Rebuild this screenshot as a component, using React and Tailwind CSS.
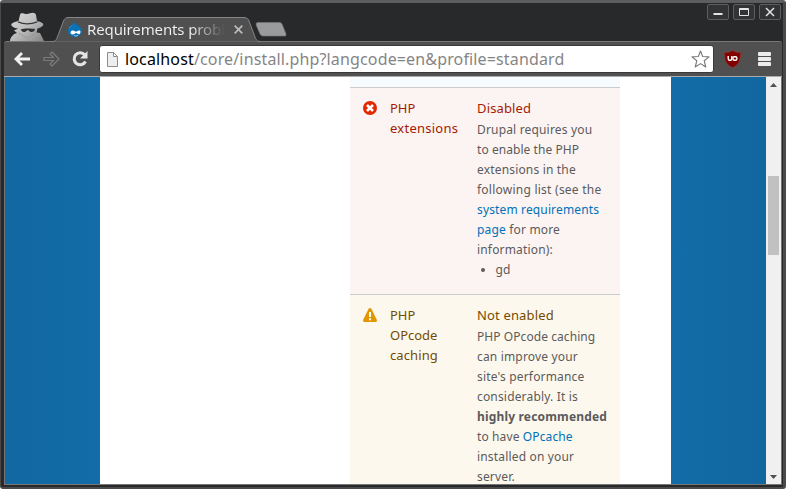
import React from "react";

function Incognito() {
  return (
    <svg className="h-[29px] w-[34px] shrink-0" viewBox="0 0 34 29">
      <defs>
        <linearGradient id="spy" x1="0" y1="0" x2="1" y2="1">
          <stop offset="0" stopColor="#dcdcdc" />
          <stop offset="0.5" stopColor="#bcbcbc" />
          <stop offset="1" stopColor="#858585" />
        </linearGradient>
      </defs>
      <path fill="url(#spy)" d="M10 3C10 1 12 .8 14 1.500C16 2.300 18 2.200 20 1.300C23 .2 25.500 .8 26 3L27 9C31 10 34 11.500 33.300 13C32.500 15 29.500 16 27.500 16.500L26.500 20.500L30 21L34 29H0C.5 25 3 22 7 21L4 18.500L8 16.500C4 16 1 14 1.300 12.500C1.500 11 5 9.800 8.500 9Z" />
      <path fill="none" stroke="#393a3b" strokeWidth="1.300" d="M8 9.800Q17 14 27.300 9.800" />
      <path fill="#303132" d="M11 17.300C13 16.300 22 16.300 25 17.100C25 20.500 20 21 18.500 18.300H17C15.500 21 11 20.500 11 17.300Z" />
      <path fill="none" stroke="#999" strokeWidth="1" d="M8.500 21L17 26L25.500 21" />
    </svg>
  );
}

function Droplet() {
  return (
    <svg className="h-[15px] w-[14px] shrink-0" viewBox="0 0 14 15">
      <path fill="#0a72b8" d="M6.200 0C7 2 9.500 2.500 11.500 4.500C13 6 14 7.500 13.600 9.800C13 13 10 15 7 15C3 15 0 12.200 0 8.700C0 6 1.300 4.300 3.300 3.200C5 2.300 6 1.500 6.200 0Z" />
      <path fill="#7cc1ea" d="M5.800 1.800C5 3.800 2.500 4 1.300 6.500C1.500 4.200 5 3.800 5.800 1.800Z" />
      <path fill="#fff" d="M4.500 8.500C6 8.200 7 9.300 8.200 9.700C9.400 9 11.300 7.800 12.300 9C13 10.300 12 12.300 10.800 12.200C9.800 12 9 11 8.200 11C7.300 11 6.300 12.500 4.700 12.400C1.800 12.200 2 9 4.500 8.500ZM6.200 13.200C7.300 13.900 8.800 13.900 9.500 13.100L9.800 13.800C8.800 14.600 7.200 14.500 6 13.800Z" />
    </svg>
  );
}

function WindowButton({ children }) {
  return (
    <span className="flex h-4 w-[22px] items-center justify-center rounded-[2px] border border-[#5d5e5f] bg-[#323334]">
      <svg className="h-[14px] w-5 shrink-0" viewBox="0 0 20 14" fill="none" stroke="#e4e4e4">
        {children}
      </svg>
    </span>
  );
}

function TitleBar() {
  return (
    <header className="flex h-[38px] shrink-0">
      <div className="w-[50px] shrink-0 pt-[9px] pl-[9px]"><Incognito /></div>
      <div className="relative mt-[14px] h-[25px] w-[212px] shrink-0">
        <svg className="absolute inset-0 h-[25px] w-[212px]" viewBox="0 0 212 25">
          <path fill="#505050" stroke="#868686" d="M0 24.500C4 24.500 5 23.500 6 21L12.500 4C13.500 1.500 15 .5 17 .5H193C195.500 .5 197 1.500 198 4L204 20C205.500 23.500 206.500 24.500 210 24.500" />
        </svg>
        <div className="relative flex h-[24px] items-center pl-[17px]">
          <Droplet />
          <span className="ml-[5px] w-[138px] bg-gradient-to-r from-[#f2f2f2] from-75% to-[#505050] to-100% bg-clip-text text-[15px] leading-6 tracking-[-0.12px] whitespace-nowrap text-transparent">
            Requirements probl
          </span>
          <svg className="ml-[9px] h-[9px] w-[9px] shrink-0" viewBox="0 0 9 9" stroke="#bbb" strokeWidth="1.700">
            <path d="M.7 .7L8.300 8.300M8.300 .7L.7 8.300" />
          </svg>
        </div>
      </div>
      <svg className="-ml-[8px] mt-[19px] h-[15px] w-[32px] shrink-0" viewBox="0 0 32 15">
        <path fill="#999b9c" stroke="#777" strokeWidth=".7" d="M3 .5H24.500Q26.500 .5 27.200 2.500L31 12Q31.500 14 30 14H8Q6 14 5 12L1.200 3Q.5 .5 3 .5Z" />
      </svg>
      <div className="mt-[1px] mr-[2px] ml-auto flex gap-1">
        <WindowButton><path strokeWidth="2" d="M5.500 9H14.500" /></WindowButton>
        <WindowButton><path d="M5.500 3.500H14.500V10.500H5.500ZM5 4.500H15" /></WindowButton>
        <WindowButton><path strokeWidth="1.500" d="M6 3L14 11M14 3L6 11" /></WindowButton>
      </div>
    </header>
  );
}

function Toolbar() {
  return (
    <div className="mr-px ml-[3px] flex h-[36px] shrink-0 items-center rounded-t-[3px] border-t border-b border-t-[#777] border-b-[#aaa] bg-[#505050] pl-[10px]">
      <svg className="h-[14px] w-4 shrink-0" viewBox="0 0 16 14" fill="none" stroke="#f1f1f1" strokeWidth="2.800">
        <path d="M8 1L2 7L8 13M2 7H16" />
      </svg>
      <svg className="ml-[13px] h-[16px] w-[17px] shrink-0" viewBox="0 0 17 16" fill="none" stroke="#7b7b7b" strokeWidth="1.200">
        <path strokeLinejoin="round" d="M9 1L16 8L9 15L7 13L10.500 9.500H1V6.500H10.500L7 3Z" />
      </svg>
      <svg className="ml-[12px] h-4 w-4 shrink-0" viewBox="0 0 16 16" fill="none" stroke="#e5e5e5" strokeWidth="3">
        <path d="M12.700 3.800A6 6 0 1 0 13.500 10.500" />
        <path fill="#e5e5e5" stroke="none" d="M15.500 0V7.500H8Z" />
      </svg>
      <div className="ml-[11px] flex h-[28px] w-[615px] shrink-0 items-center rounded-[3px] border border-[#393939] bg-white pl-[7px]">
        <svg className="h-[15px] w-[11px] shrink-0" viewBox="0 0 11 15">
          <path fill="#eee" stroke="#8d8d8d" d="M.5 .5H6.500L10.500 4.500V14.500H.5ZM6.500 .5V4.500H10.500" />
        </svg>
        <span className="ml-[7px] text-[16px] leading-6 tracking-[0.145px] whitespace-nowrap text-[#858585]">
          <span className="text-black">localhost</span>/core/install.php?langcode=en&amp;profile=standard
        </span>
        <svg className="mr-[3px] ml-auto h-[18px] w-[19px] shrink-0" viewBox="0 0 19 18" fill="#fff" stroke="#777" strokeWidth="1.100">
          <path strokeLinejoin="round" d="M9.500 1L11.700 6.500L18 6.900L13.200 10.800L14.800 17L9.500 13.600L4.200 17L5.800 10.800L1 6.900L7.300 6.500Z" />
        </svg>
      </div>
      <svg className="ml-[10px] h-[18px] w-[17px] shrink-0" viewBox="0 0 17 18">
        <path fill="#800000" stroke="#983333" strokeWidth=".7" d="M8.500 .5C11 2.300 13.500 2.500 16.500 2.500C16.500 11 14.500 15 8.500 17.500C2.500 15 .5 11 .5 2.500C3.500 2.500 6 2.300 8.500 .5Z" />
        <path fill="none" stroke="#fff" strokeWidth="1.400" d="M4.200 6V8.800Q4.200 10.300 5.600 10.300H6.400Q7.800 10.300 7.800 8.800V6" />
        <rect x="8.900" y="6.700" width="4" height="3.600" rx="1.500" fill="none" stroke="#fff" strokeWidth="1.400" />
      </svg>
      <div className="mb-px ml-[17px] flex w-[13px] shrink-0 flex-col gap-px">
        <span className="h-1 rounded-[1px] bg-[#ececec]" />
        <span className="h-1 rounded-[1px] bg-[#ececec]" />
        <span className="h-1 rounded-[1px] bg-[#ececec]" />
      </div>
    </div>
  );
}

function ErrorIcon() {
  return (
    <svg className="h-[14px] w-[14px]" viewBox="0 0 14 14">
      <circle cx="7" cy="7" r="7" fill="#e32700" />
      <path d="M4 4L10 10M10 4L4 10" stroke="#fff" strokeWidth="2.600" />
    </svg>
  );
}

function WarningIcon() {
  return (
    <svg className="h-[14px] w-[14px]" viewBox="0 0 14 14">
      <path fill="#e29700" d="M7 0Q8 0 8.500 1L13.700 11.500Q14.500 14 12.500 14H1.500Q-.5 14 .3 11.500L5.500 1Q6 0 7 0Z" />
      <path fill="#fff" d="M6 4H8V9H6ZM6 10.300H8V12.300H6Z" />
    </svg>
  );
}

function Row({ icon, title, status, rowClass, textClass, children }) {
  return (
    <section className={"flex shrink-0 border-t border-[#ccc] pt-[10px] text-[13px] leading-5 " + rowClass}>
      <div className="w-10 shrink-0 pt-[3px] pl-[13px]">{icon}</div>
      <div className={"w-[87px] shrink-0 whitespace-nowrap " + textClass}>{title}</div>
      <div className="whitespace-nowrap">
        <div className={"tracking-[0.15px] " + textClass}>{status}</div>
        <div className="mt-0.5 text-[12px] leading-5 text-[#5b5b5b]">{children}</div>
      </div>
    </section>
  );
}

function Line({ className = "tracking-[0.17px]", children }) {
  return <div className={"h-5 " + className}>{children}</div>;
}

export default function App() {
  return (
    <div className="flex h-[489px] w-[786px] flex-col overflow-hidden rounded-[3px] border-t-[3px] border-r-[3px] border-b-[2px] border-l-[1px] border-t-[#5c5d5f] border-r-[#4a4a4a] border-b-[#4a4a4a] border-l-[#4a4a4a] bg-[#28292b] font-['Noto_Sans',sans-serif]">
      <TitleBar />
      <Toolbar />
      <div className="mr-px ml-[3px] flex h-[408px] shrink-0 border-r border-b border-l border-[#777] bg-[#1169a4]">
        <div className="w-[95px] shrink-0 bg-gradient-to-r from-[#1268a1] to-[#126ca7]" />
        <main className="flex w-[571px] shrink-0 overflow-hidden bg-white pl-[250px]">
          <div className="flex w-[270px] flex-col">
            <div className="h-[10px] shrink-0 bg-[#f5fbff]" />
            <Row icon={<ErrorIcon />} rowClass="h-[207px] bg-[#fcf4f2]" textClass="text-[#a51b00]"
              title={<><Line className="">PHP</Line><Line className="tracking-[0.25px]">extensions</Line></>} status="Disabled">
              <Line>Drupal requires you</Line>
              <Line className="tracking-[0.06px]">to enable the PHP</Line>
              <Line>extensions in the</Line>
              <Line className="tracking-[0.24px]">following list (see the</Line>
              <Line className="tracking-[0.14px] text-[#0071b8]">system requirements</Line>
              <Line><span className="text-[#0071b8]">page</span> for more</Line>
              <Line>information):</Line>
              <ul className="list-disc pl-[18.5px] tracking-[0.2px]"><li>gd</li></ul>
            </Row>
            <Row icon={<WarningIcon />} rowClass="h-[220px] bg-[#fdf8ed]" textClass="text-[#734c00]"
              title={<><Line className="">PHP</Line><Line className="">OPcode</Line><Line className="tracking-[0.1px]">caching</Line></>} status="Not enabled">
              <Line className="tracking-[0.07px]">PHP OPcode caching</Line>
              <Line>can improve your</Line>
              <Line>site's performance</Line>
              <Line>considerably. It is</Line>
              <Line className="font-bold tracking-[0.17px]">highly recommended</Line>
              <Line className="tracking-[0.12px]">to have <span className="text-[#0071b8]">OPcache</span></Line>
              <Line>installed on your</Line>
              <Line>server.</Line>
            </Row>
          </div>
        </main>
        <div className="w-[95px] shrink-0 bg-gradient-to-r from-[#126ca7] to-[#12679f]" />
        <div className="flex w-[15px] shrink-0 flex-col items-center bg-[#f0f0f0] pt-[6px] pb-[5px]">
          <svg className="h-1 w-[7px]" viewBox="0 0 7 4"><path fill="#505050" d="M0 4L3.500 0L7 4Z" /></svg>
          <div className="mt-[89px] h-[79px] w-[11px] bg-[#c1c1c1]" />
          <svg className="mt-auto h-1 w-[7px]" viewBox="0 0 7 4"><path fill="#505050" d="M0 0H7L3.500 4Z" /></svg>
        </div>
      </div>
    </div>
  );
}
